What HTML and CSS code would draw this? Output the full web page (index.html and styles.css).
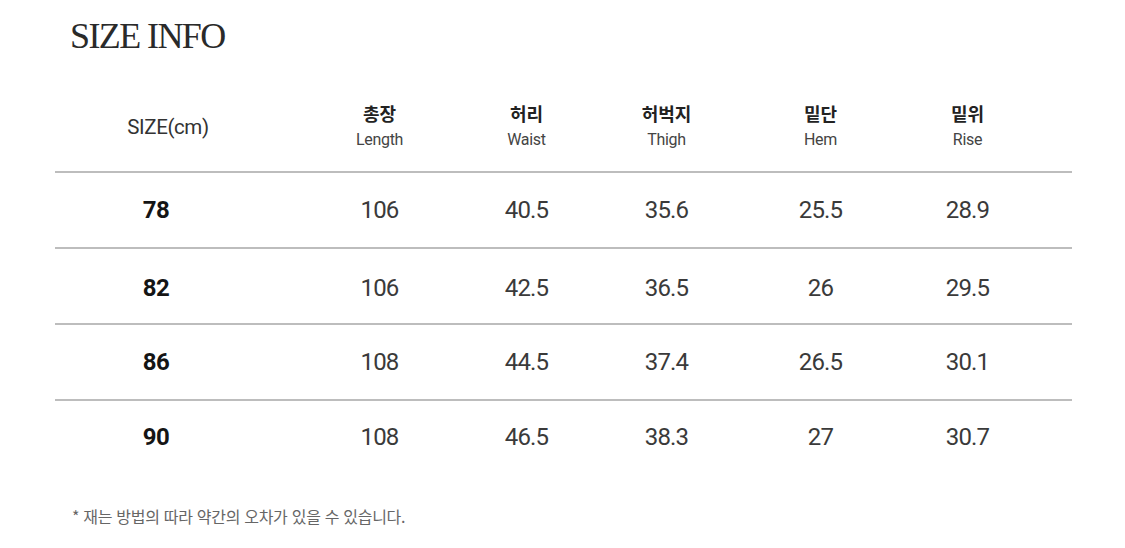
FILE: index.html
```html
<!DOCTYPE html>
<html lang="ko">
<head>
<meta charset="utf-8">
<title>Size Info</title>
<link rel="stylesheet" href="styles.css">
</head>
<body>
<div class="page">
  <h1 class="title">SIZE INFO</h1>
  <div class="table">
    <div class="row head">
      <div class="cell label-head">SIZE(cm)</div>
      <div class="cell"><span class="ko">총장</span><span class="en">Length</span></div>
      <div class="cell"><span class="ko">허리</span><span class="en">Waist</span></div>
      <div class="cell"><span class="ko">허벅지</span><span class="en">Thigh</span></div>
      <div class="cell"><span class="ko">밑단</span><span class="en">Hem</span></div>
      <div class="cell"><span class="ko">밑위</span><span class="en">Rise</span></div>
    </div>
    <div class="row body">
      <div class="cell size">78</div>
      <div class="cell">106</div>
      <div class="cell">40.5</div>
      <div class="cell">35.6</div>
      <div class="cell">25.5</div>
      <div class="cell">28.9</div>
    </div>
    <div class="row body">
      <div class="cell size">82</div>
      <div class="cell">106</div>
      <div class="cell">42.5</div>
      <div class="cell">36.5</div>
      <div class="cell">26</div>
      <div class="cell">29.5</div>
    </div>
    <div class="row body">
      <div class="cell size">86</div>
      <div class="cell">108</div>
      <div class="cell">44.5</div>
      <div class="cell">37.4</div>
      <div class="cell">26.5</div>
      <div class="cell">30.1</div>
    </div>
    <div class="row body last">
      <div class="cell size">90</div>
      <div class="cell">108</div>
      <div class="cell">46.5</div>
      <div class="cell">38.3</div>
      <div class="cell">27</div>
      <div class="cell">30.7</div>
    </div>
  </div>
  <p class="note">* 재는 방법의 따라 약간의 오차가 있을 수 있습니다.</p>
</div>
</body>
</html>
```
FILE: styles.css
```css
* { box-sizing: border-box; }
html, body { margin: 0; padding: 0; background: #fff; }
body {
  font-family: Roboto, "Noto Sans CJK KR", sans-serif;
  color: #333;
}
.page {
  width: 1125px;
  height: 548px;
  padding: 0 53px 0 55px;
  overflow: hidden;
}
.title {
  margin: 0;
  padding: 18px 0 0 15px;
  font-family: "Liberation Serif", serif;
  font-weight: 400;
  font-size: 36px;
  line-height: 36px;
  letter-spacing: -1.6px;
  color: #2a2a2a;
}
.table {
  margin-top: 41px;
  width: 1017px;
}
.row {
  display: grid;
  grid-template-columns: 251px repeat(5, 147px) 1fr;
  align-items: center;
}
.row.head {
  height: 78px;
  padding-bottom: 14px;
  border-bottom: 2px solid #bdbdbd;
}
.row.body {
  height: 76px;
  border-bottom: 2px solid #bdbdbd;
}
.row.body:nth-child(3) { padding-top: 3px; }
.row.body.last {
  border-bottom: none;
  height: 74px;
  padding-bottom: 3px;
}
.cell {
  text-align: center;
  display: flex;
  flex-direction: column;
  align-items: center;
  font-size: 24px;
  letter-spacing: -0.8px;
  color: #3a3a3a;
}
.cell:first-child { padding-right: 49px; }
.cell:nth-child(4) { padding-right: 14px; }
.cell.label-head {
  font-size: 20.5px;
  letter-spacing: -0.4px;
  color: #333;
  padding-right: 25px;
  padding-top: 2px;
}
.ko {
  font-family: "Noto Sans CJK KR", sans-serif;
  font-weight: 700;
  font-size: 18px;
  line-height: 24px;
  letter-spacing: 0;
  color: #222;
}
.en {
  font-size: 16px;
  line-height: 22px;
  margin-top: 4px;
  letter-spacing: -0.3px;
  color: #444;
}
.size {
  font-weight: 700;
  color: #151515;
  letter-spacing: -0.5px;
}
.note {
  margin: 30px 0 0 17px;
  font-family: "Noto Sans CJK KR", sans-serif;
  font-size: 16px;
  line-height: 22px;
  color: #666;
  letter-spacing: -0.3px;
}
```
